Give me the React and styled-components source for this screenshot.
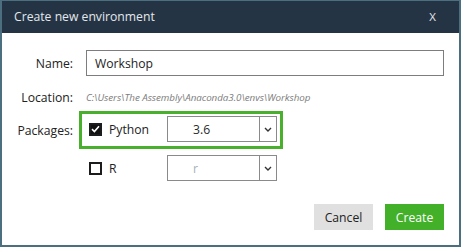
import React from "react";
import styled, { createGlobalStyle } from "styled-components";

const Global = createGlobalStyle`
  html, body { margin: 0; padding: 0; background: #ffffff; }
  body { font-family: "Open Sans", "Noto Sans", "DejaVu Sans", sans-serif; }
  * { box-sizing: border-box; }
`;

const Window = styled.div`
  width: 461px;
  height: 247px;
  border: 2px solid #4b6f7f;
  border-top-width: 1px;
  background: #ffffff;
  display: flex;
  flex-direction: column;
`;

const TitleBar = styled.div`
  height: 32px;
  background: #253445;
  color: #e3e8ec;
  font-size: 12.2px;
  display: flex;
  align-items: center;
  justify-content: space-between;
  padding: 0 23px 1px 12px;
`;

const CloseX = styled.span`
  font-size: 11.5px;
  color: #e3e8ec;
`;

const Body = styled.div`
  display: grid;
  grid-template-columns: 71px 1fr;
  column-gap: 13px;
  padding: 17px 15px 0 0;
  align-items: center;
  color: #222;
  font-size: 12.2px;
`;

const Label = styled.div`
  text-align: right;
  grid-column: 1;
  align-self: ${(p) => p.$self || "center"};
  margin-top: ${(p) => p.$mt || 0}px;
`;

const TextInput = styled.div`
  height: 26px;
  border: 1px solid #7d7d7d;
  padding-left: 8px;
  display: flex;
  align-items: center;
  color: #222;
`;

const Path = styled.div`
  font-family: "Open Sans", sans-serif;
  font-style: italic;
  font-size: 9.8px;
  color: #7c7c7c;
  height: 18px;
  display: flex;
  align-items: center;
  margin-top: 12px;
  letter-spacing: -0.05px;
`;

const Packages = styled.div`
  display: flex;
  flex-direction: column;
  margin-top: 5px;
`;

const Highlight = styled.div`
  margin-left: -7px;
  width: 204px;
  border: 3px solid #48b02c;
  padding: 2px 3px 4px 7px;
`;

const PkgRow = styled.div`
  display: flex;
  align-items: center;
  padding-left: ${(p) => p.$pl || 0}px;
  margin-top: ${(p) => p.$mt || 0}px;
`;

const Check = styled.span`
  width: 13px;
  height: 13px;
  border: 2px solid #1c1c1c;
  background: ${(p) => (p.$on ? "#111" : "#fff")};
  display: inline-flex;
  align-items: center;
  justify-content: center;
  flex: none;
`;

const PkgName = styled.span`
  width: 65px;
  padding-left: 7px;
  color: #222;
`;

const Select = styled.div`
  width: 110px;
  height: 26px;
  border: 1px solid #8a8a8a;
  display: flex;
  align-items: stretch;
`;

const SelectValue = styled.div`
  flex: 1;
  display: flex;
  align-items: center;
  padding-left: 25px;
  color: ${(p) => (p.$muted ? "#a9b0b8" : "#2a2a2a")};
`;

const SelectArrow = styled.div`
  width: 17px;
  border-left: 1px solid #8a8a8a;
  display: flex;
  align-items: center;
  justify-content: center;
`;

const Footer = styled.div`
  display: flex;
  justify-content: flex-end;
  gap: 12px;
  padding: 23px 15px 0 0;
`;

const Button = styled.div`
  width: 59px;
  height: 26px;
  display: flex;
  align-items: center;
  justify-content: center;
  font-size: 12.2px;
  background: ${(p) => (p.$primary ? "#43b02a" : "#e0e0e0")};
  color: ${(p) => (p.$primary ? "#ffffff" : "#222")};
`;

const Chevron = () => (
  <svg width="8" height="5" viewBox="0 0 8 5">
    <path d="M1 1 L4 4 L7 1" fill="none" stroke="#333" strokeWidth="1.4" />
  </svg>
);

const Tick = () => (
  <svg width="9" height="8" viewBox="0 0 9 8">
    <path d="M1 4.2 L3.4 6.5 L8 1.3" fill="none" stroke="#fff" strokeWidth="1.6" />
  </svg>
);

export default function App() {
  return (
    <>
      <Global />
      <Window>
        <TitleBar>
          <span>Create new environment</span>
          <CloseX>X</CloseX>
        </TitleBar>
        <Body>
          <Label>Name:</Label>
          <TextInput>Workshop</TextInput>
          <Label $mt={12}>Location:</Label>
          <Path>C:\Users\The Assembly\Anaconda3.0\envs\Workshop</Path>
          <Label $self="start" $mt={16}>Packages:</Label>
          <Packages>
            <Highlight>
              <PkgRow>
                <Check $on>
                  <Tick />
                </Check>
                <PkgName>Python</PkgName>
                <Select>
                  <SelectValue>3.6</SelectValue>
                  <SelectArrow>
                    <Chevron />
                  </SelectArrow>
                </Select>
              </PkgRow>
            </Highlight>
            <PkgRow $pl={3} $mt={6}>
              <Check />
              <PkgName>R</PkgName>
              <Select>
                <SelectValue $muted>r</SelectValue>
                <SelectArrow>
                  <Chevron />
                </SelectArrow>
              </Select>
            </PkgRow>
          </Packages>
        </Body>
        <Footer>
          <Button>Cancel</Button>
          <Button $primary>Create</Button>
        </Footer>
      </Window>
    </>
  );
}
